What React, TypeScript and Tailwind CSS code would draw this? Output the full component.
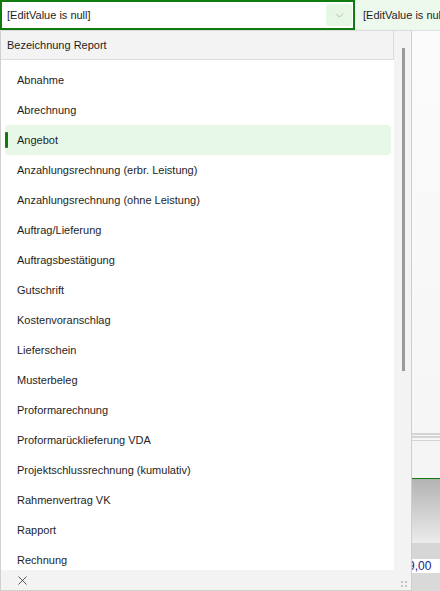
import { X, ChevronDown } from 'lucide-react';

const reports = [
  'Abnahme',
  'Abrechnung',
  'Angebot',
  'Anzahlungsrechnung (erbr. Leistung)',
  'Anzahlungsrechnung (ohne Leistung)',
  'Auftrag/Lieferung',
  'Auftragsbestätigung',
  'Gutschrift',
  'Kostenvoranschlag',
  'Lieferschein',
  'Musterbeleg',
  'Proformarechnung',
  'Proformarücklieferung VDA',
  'Projektschlussrechnung (kumulativ)',
  'Rahmenvertrag VK',
  'Rapport',
  'Rechnung',
];

const selected = 'Angebot';

const App = () => {
  return (
    <div className="w-[440px] h-[591px] overflow-hidden bg-white flex flex-col font-['Segoe_UI','Liberation_Sans',sans-serif] text-[11px] text-[#1e1e1e]">
      {/* Editor row */}
      <div className="h-[31px] flex shrink-0 border-b border-[#e2e2e2]">
        <div className="w-[355px] h-[30px] flex items-center border-2 border-[#107c10] pl-[5px] pr-[1px] bg-white">
          <span className="flex-1 leading-none">[EditValue is null]</span>
          <div className="w-[26px] h-[22px] rounded-[3px] bg-[#e6f7e6] flex items-center justify-center">
            <ChevronDown className="w-[13px] h-[13px] text-[#a0a0a0]" strokeWidth={1.2} />
          </div>
        </div>
        <div className="flex-1 bg-[#eef9ee] flex items-center pl-[8px] whitespace-nowrap overflow-hidden">
          [EditValue is null]
        </div>
      </div>

      <div className="flex-1 flex min-h-0">
        {/* Popup list */}
        <div className="w-[412px] flex flex-col border-l border-r border-[#cfcfcf] shadow-[2px_0_3px_rgba(0,0,0,0.08)] bg-white">
          <div className="flex-1 flex min-h-0">
            <div className="w-[393px] flex flex-col min-h-0">
              <div className="h-[29px] shrink-0 bg-[#f3f3f3] border-b border-r border-[#dcdcdc] flex items-center pl-[6px]">
                Bezeichnung Report
              </div>
              <div className="flex-1 overflow-hidden pt-[5px] pr-[3px]">
                {reports.map((name) => (
                  <div
                    key={name}
                    className={`h-[30px] relative flex items-center pl-[12px] ml-[4px] rounded-[4px] ${
                      name === selected ? 'bg-[#e8f8e8]' : ''
                    }`}
                  >
                    {name === selected && (
                      <span className="absolute left-[0px] top-[7px] w-[3px] h-[16px] rounded-[1px] bg-[#107c10]" />
                    )}
                    {name}
                  </div>
                ))}
              </div>
            </div>
            {/* Scrollbar */}
            <div className="flex-1 bg-[#f3f3f3] flex justify-center pt-[17px]">
              <div className="w-[3px] h-[323px] bg-[#9a9a9a] ml-[2px]" />
            </div>
          </div>
          <div className="h-[21px] shrink-0 bg-[#f3f3f3] border-b border-[#d0d0d0] flex items-center pl-[14px] relative">
            <X className="w-[15px] h-[15px] text-[#333]" strokeWidth={1.3} />
            <div className="absolute right-[4px] bottom-[3px] grid grid-cols-2 gap-[2px]">
              <span className="w-[2px] h-[2px] bg-[#c4c4c4]" />
              <span className="w-[2px] h-[2px] bg-[#c4c4c4]" />
              <span className="w-[2px] h-[2px] bg-[#c4c4c4]" />
              <span className="w-[2px] h-[2px] bg-[#c4c4c4]" />
            </div>
          </div>
        </div>

        {/* Background form behind the popup */}
        <div className="flex-1 flex flex-col overflow-hidden">
          <div className="h-[402px] bg-gradient-to-b from-[#fbfbfb] to-[#f6f6f6]" />
          <div className="h-[2px] bg-[#d4d4d4]" />
          <div className="h-[1px] bg-[#f7f7f7]" />
          <div className="h-[2px] bg-[#d4d4d4]" />
          <div className="h-[2px] bg-[#f7f7f7]" />
          <div className="h-[1px] bg-[#d4d4d4]" />
          <div className="h-[37px] bg-[#f5f5f5]" />
          <div className="h-[1px] bg-[#107c10]" />
          <div className="h-[64px] bg-gradient-to-b from-[#b3b3b3] to-[#ececec]" />
          <div className="h-[16px] bg-[#d6d6d6]" />
          <div className="h-[14px] bg-white flex items-center text-[12px] text-[#1a1a8a] leading-none -ml-[4px]">9,00</div>
          <div className="flex-1 bg-[#d9d9d9]" />
        </div>
      </div>
    </div>
  );
};

export default App;
